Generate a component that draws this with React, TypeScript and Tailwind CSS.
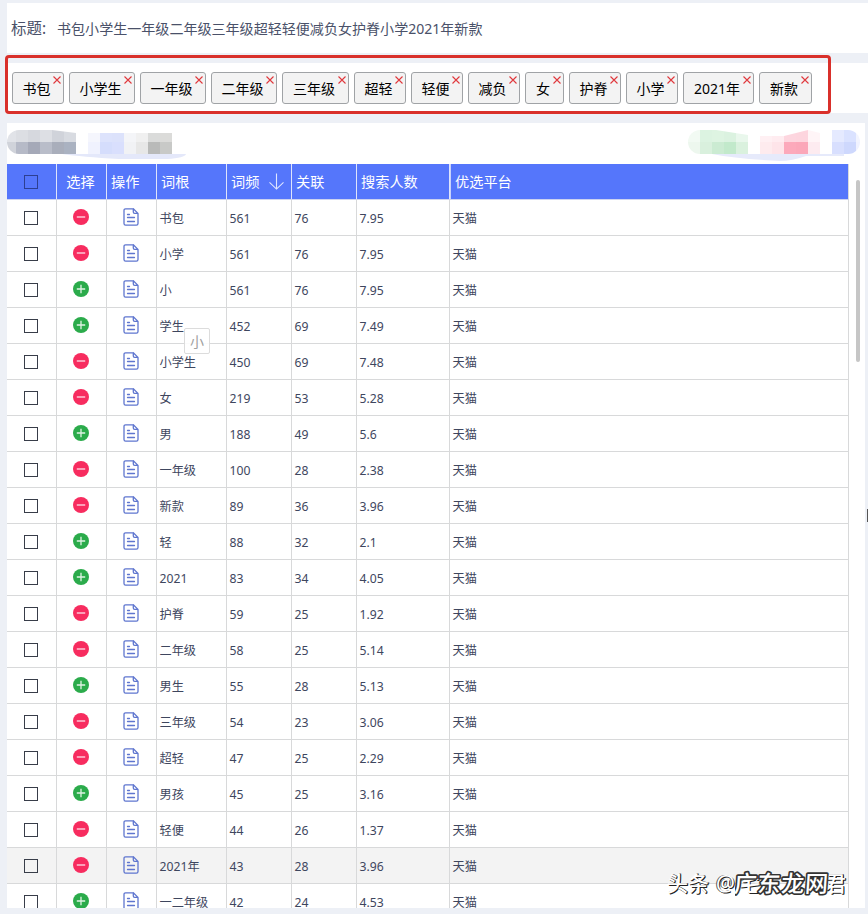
import React from 'react';

type Row = [keep: boolean, word: string, freq: string, related: string, searches: string];

const ROWS: Row[] = [
  [false, '书包', '561', '76', '7.95'],
  [false, '小学', '561', '76', '7.95'],
  [true, '小', '561', '76', '7.95'],
  [true, '学生', '452', '69', '7.49'],
  [false, '小学生', '450', '69', '7.48'],
  [false, '女', '219', '53', '5.28'],
  [true, '男', '188', '49', '5.6'],
  [false, '一年级', '100', '28', '2.38'],
  [false, '新款', '89', '36', '3.96'],
  [true, '轻', '88', '32', '2.1'],
  [true, '2021', '83', '34', '4.05'],
  [false, '护脊', '59', '25', '1.92'],
  [false, '二年级', '58', '25', '5.14'],
  [true, '男生', '55', '28', '5.13'],
  [false, '三年级', '54', '23', '3.06'],
  [false, '超轻', '47', '25', '2.29'],
  [true, '男孩', '45', '25', '3.16'],
  [false, '轻便', '44', '26', '1.37'],
  [false, '2021年', '43', '28', '3.96'],
  [true, '一二年级', '42', '24', '4.53'],
];

const TAGS: [string, string][] = [
  ['书包', 'w-[52px]'],
  ['小学生', 'w-[66px]'],
  ['一年级', 'w-[66px]'],
  ['二年级', 'w-[66px]'],
  ['三年级', 'w-[67px]'],
  ['超轻', 'w-[52px]'],
  ['轻便', 'w-[52px]'],
  ['减负', 'w-[52px]'],
  ['女', 'w-[39px]'],
  ['护脊', 'w-[52px]'],
  ['小学', 'w-[52px]'],
  ['2021年', 'w-[71px]'],
  ['新款', 'w-[53px]'],
];

const GRID = 'grid grid-cols-[50px_50px_50px_70px_65px_65px_93px_399px]';

function Tag({ label, width }: { label: string; width: string }) {
  return (
    <div className={`relative flex h-8 shrink-0 items-center justify-center rounded-[3px] border border-[#a0a3a6] bg-[#f3f3f3] pr-[3px] text-sm text-black ${width}`}>
      <span className="mt-[1px] leading-5 whitespace-nowrap">{label}</span>
      <svg className="absolute top-[3px] right-[2px]" width="8" height="8" viewBox="0 0 8 8" stroke="#e0383c" strokeWidth="1.1">
        <path d="M.5 .5 7.5 7.5M7.5 .5 .5 7.5" />
      </svg>
    </div>
  );
}

function StateIcon({ add }: { add: boolean }) {
  return (
    <svg width="16" height="16" viewBox="0 0 16 16">
      <circle cx="8" cy="8" r="8" fill={add ? '#2bab4b' : '#f72c5f'} />
      <path d={add ? 'M3.8 8h8.4M8 3.8v8.4' : 'M3.8 8h8.4'} stroke="#fff" strokeOpacity=".85" strokeWidth="1.3" />
    </svg>
  );
}

function DocIcon() {
  return (
    <svg width="16" height="18" viewBox="0 0 16 18" fill="none" stroke="#5f76cf" strokeWidth="1.3" strokeLinecap="round" strokeLinejoin="round">
      <path d="M10.3 .8H2.6Q1 .8 1 2.4v13.2q0 1.6 1.6 1.6h10.8q1.6 0 1.6-1.6V5.4L10.3 .8v3.2q0 1.4 1.4 1.4H15" />
      <path d="M4.5 6.5h2M4.5 9.5h7M4.5 13.5h7" />
    </svg>
  );
}

function Mosaic({ cells }: { cells: string[] }) {
  return (
    <>
      {cells.map((c, i) => (
        <span key={i} className="h-3" style={{ background: c }} />
      ))}
    </>
  );
}

function Toolbar() {
  return (
    <div className="flex h-[41px] w-[858px] items-start justify-between pt-[7px]">
      <div className="relative h-7 w-[182px]">
        <svg className="absolute top-0 left-0" width="182" height="30">
          <path d="M55 24H179Q178 28 160 29H112Q75 27 55 24Z" fill="#e4e8fa" />
        </svg>
        <div className="relative flex">
          <div className="grid w-[69px] grid-cols-[9px_12px_12px_12px_12px_12px] overflow-hidden rounded-l-full [clip-path:polygon(0_0,45px_0,69px_3px,69px_100%,0_100%)]">
            <Mosaic cells={['#e1e3e8', '#dcdee3', '#d6d8de', '#dddfe4', '#d0d3da', '#d8dbe1', '#d0d3da', '#b6bac7', '#a5a9b8', '#b9bdc9', '#a9aebb', '#aab2c1']} />
          </div>
          <div className="mt-[3px] ml-3 grid h-[21px] w-[84px] grid-cols-7 grid-rows-[9px_12px] overflow-hidden">
            <Mosaic cells={['#f5f6fd', '#dde3fc', '#dce2fb', '#f4f5f8', '#f0f0f0', '#dadbda', '#dbdbd9', '#f0f2fe', '#d5ddfc', '#d9dffd', '#f1f2f5', '#e7e7e7', '#b9bab9', '#c8c9c7']} />
          </div>
        </div>
      </div>
      <div className="relative mr-[5px] h-7 w-[172px]">
        <svg className="absolute top-0 left-0" width="168" height="31">
          <path d="M24 24H156V26H118Q104 31 92 31Q50 29 24 24Z" fill="#e6eafb" />
        </svg>
        <div className="relative flex">
          <div className="grid w-[60px] grid-cols-5 overflow-hidden rounded-l-full [clip-path:polygon(0_0,28px_0,60px_5px,60px_100%,0_100%)]">
            <Mosaic cells={['#f2faf3', '#dcf3e1', '#def4e2', '#dbf2e0', '#e9f7ec', '#edf7ee', '#d9f0dd', '#cbebd2', '#c2e9cb', '#daf1de']} />
          </div>
          <div className="ml-3 grid w-[60px] grid-cols-5 [clip-path:polygon(0_6px,24px_6px,48px_0,60px_3px,60px_100%,0_100%)]">
            <Mosaic cells={['#fff0f3', '#ffecf0', '#fdd6df', '#fdd5de', '#fff5f7', '#feebee', '#fee4e9', '#fca9bb', '#fba7b9', '#fdebf0']} />
          </div>
          <div className="ml-3 grid w-[28px] grid-cols-[12px_12px_4px] overflow-hidden rounded-r-full">
            <Mosaic cells={['#e5eaff', '#dae2ff', '#f2f4fe', '#d8dffe', '#ced8fd', '#f0f2ff']} />
          </div>
        </div>
      </div>
    </div>
  );
}

function TableHead() {
  const cell = 'flex items-center border-r border-[#dfe4fb] pl-1';
  return (
    <div className={`${GRID} h-9 border-b border-[#cdd3f0] bg-[#5576fb] text-[14.2px] text-white`}>
      <div className="flex items-center justify-center border-r border-[#dfe4fb] pr-0.5">
        <span className="size-[14px] border border-[#2d3f91]" />
      </div>
      <div className="flex items-center justify-center border-r border-[#dfe4fb] pr-0.5">选择</div>
      <div className={cell}>操作</div>
      <div className={cell}>词根</div>
      <div className={`${cell} gap-[9px]`}>
        词频
        <svg className="mb-px" width="16" height="17" viewBox="0 0 16 17" fill="none" stroke="#dfe6ff" strokeWidth="1.1">
          <path d="M8.5 .5v15.6M1.5 9.4l7 6.7 7-6.7" />
        </svg>
      </div>
      <div className={cell}>关联</div>
      <div className={`${cell} relative after:absolute after:top-0 after:-right-[2px] after:h-full after:w-px after:bg-[#c8d2fb]`}>搜索人数</div>
      <div className="flex items-center border-r border-[#d8dadd] pl-[5px]">优选平台</div>
    </div>
  );
}

function TableRow({ row, active }: { row: Row; active: boolean }) {
  const [add, word, freq, related, searches] = row;
  const cell = 'flex items-center border-r border-[#d8d9da] pl-[2.5px] pt-[3px] whitespace-nowrap';
  return (
    <div className={`${GRID} h-9 shrink-0 border-b border-[#d8d9da] text-[12.2px] leading-4 text-[#3e465e] ${active ? 'bg-[#f3f3f3]' : 'bg-white'}`}>
      <div className="flex items-center justify-center border-r border-[#d8d9da] pt-px pr-0.5">
        <span className="size-[14px] border border-[#383d49]" />
      </div>
      <div className="flex items-start justify-center border-r border-[#d8d9da] pt-[9px] pr-px">
        <StateIcon add={add} />
      </div>
      <div className="flex items-start justify-center border-r border-[#d8d9da] pt-2 pr-px">
        <DocIcon />
      </div>
      <div className={cell}>{word}</div>
      <div className={cell}>{freq}</div>
      <div className={cell}>{related}</div>
      <div className={cell}>{searches}</div>
      <div className={cell}>天猫</div>
    </div>
  );
}

export default function App() {
  return (
    <div className="relative flex h-[914px] w-[868px] flex-col gap-2.5 overflow-hidden bg-[#edf0f6] pt-[3px] pl-[7px] font-['Noto_Sans','Noto_Sans_CJK_SC',sans-serif]">
      <section className="flex h-[50px] shrink-0 items-center bg-white pt-0.5 pl-1 text-[#4a5169]">
        <span className="w-[46px] text-[15.5px]">标题:</span>
        <span className="text-[14.05px]">书包小学生一年级二年级三年级超轻轻便减负女护脊小学2021年新款</span>
      </section>

      <section className="flex h-[50px] shrink-0 items-center gap-[5px] bg-white pl-[5px]">
        {TAGS.map(([label, width]) => (
          <Tag key={label} label={label} width={width} />
        ))}
      </section>

      <section className="relative h-[785px] w-[858px] shrink-0 overflow-hidden bg-white">
        <Toolbar />
        <div className="flex w-[842px] flex-col">
          <TableHead />
          {ROWS.map((row, i) => (
            <TableRow key={i} row={row} active={i === 18} />
          ))}
        </div>
        <div className="absolute top-[57px] right-[5px] h-[182px] w-1 rounded-full bg-[#c6c6c6]" />
      </section>

      {/* highlight frame around the tag list */}
      <div className="absolute top-[55px] left-[5px] h-[59px] w-[826px] rounded-[4px] border-[3px] border-[#d9302b]" />

      {/* drag ghost */}
      <div className="absolute top-[328px] left-[184px] flex h-[26px] w-[26px] items-center justify-center rounded-[2px] border border-[#dcdcdc] bg-white/90 pt-0.5 text-sm text-[#a0a0a0]">
        小
      </div>

      <div className="absolute top-[509px] right-0 h-[13px] w-px bg-[#555]" />

      {/* watermark */}
      <div className="absolute top-[870px] left-[667px] flex h-7 items-center text-[21px] font-medium whitespace-nowrap text-white">
        <span className="w-[49px] [text-shadow:1px_1px_0_#222,1px_0_0_#222]">头条</span>
        <span className="w-[19px] [text-shadow:1px_1px_0_#222,-1px_0_0_#555]">@</span>
        <span className="relative w-[92px]">
          <span className="absolute -top-0.5 left-1 [text-shadow:1px_1px_0_#222]">宅</span>
          <svg className="relative block" width="96" height="28">
            <text x="0" y="22" fontSize="23" textLength="94" fontWeight="500" fill="#fff" stroke="#333" strokeWidth="3.4" paintOrder="stroke" strokeLinejoin="round" transform="skewX(-4)">
              广东龙网
            </text>
          </svg>
        </span>
        <span className="-ml-0.5 [text-shadow:1px_1px_0_#222,1px_0_0_#222]">君</span>
      </div>
    </div>
  );
}
